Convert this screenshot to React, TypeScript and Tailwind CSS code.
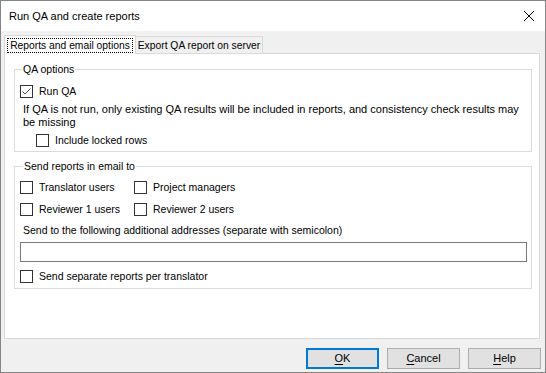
import React, { useState } from 'react';

const Checkbox: React.FC<{ checked?: boolean; onChange?: () => void }> = ({ checked, onChange }) => (
  <span
    onClick={onChange}
    className="w-[13px] h-[13px] border border-[#333333] bg-white flex items-center justify-center shrink-0"
  >
    {checked && (
      <svg width="11" height="11" viewBox="0 0 11 11">
        <path d="M1.5 5.5 L4 8 L9.5 2.5" fill="none" stroke="#555555" strokeWidth="1" />
      </svg>
    )}
  </span>
);

const CheckRow: React.FC<{ label: string; checked?: boolean; className?: string }> = ({ label, checked = false, className = '' }) => {
  const [on, setOn] = useState(checked);
  return (
    <label className={`h-[17px] flex items-center gap-[6px] cursor-default ${className}`}>
      <Checkbox checked={on} onChange={() => setOn(!on)} />
      <span className="leading-[15px] whitespace-nowrap">{label}</span>
    </label>
  );
};

const Button: React.FC<{ accel: string; rest: string; primary?: boolean }> = ({ accel, rest, primary }) => (
  <button
    className={`w-[73px] h-[21px] bg-[#e1e1e1] flex items-center justify-center leading-none text-[11px] ${
      primary ? 'border-2 border-[#0078d7]' : 'border border-[#adadad]'
    }`}
  >
    <span className="underline underline-offset-2">{accel}</span>
    {rest}
  </button>
);

export default function App() {
  const [addresses, setAddresses] = useState('');

  return (
    <div
      className="w-[546px] h-[373px] border border-[#858585] bg-[#f0f0f0] flex flex-col text-[10.5px] text-black"
      style={{ fontFamily: '"Liberation Sans", Arial, sans-serif' }}
    >
      {/* Title bar */}
      <div className="h-[30px] bg-white flex items-center justify-between pl-[8px] pr-[10px] shrink-0 text-[11px]">
        <span>Run QA and create reports</span>
        <svg width="12" height="12" viewBox="0 0 12 12">
          <path d="M1 1 L11 11 M11 1 L1 11" stroke="#000" strokeWidth="1" />
        </svg>
      </div>

      {/* Tabs */}
      <div className="flex items-end h-[22px] pl-[3px] shrink-0 whitespace-nowrap text-[10.3px]">
        <div className="w-[132px] h-[19px] shrink-0 px-[2px] pt-[2px] bg-white border border-b-0 border-[#d9d9d9] relative z-10 -mb-px">
          <span className="block text-center leading-[13px] border border-dotted border-black">Reports and email options</span>
        </div>
        <div className="w-[127px] h-[17px] shrink-0 border border-b-0 border-l-0 border-[#d9d9d9] bg-[#f0f0f0] leading-[17px] text-center">
          Export QA report on server
        </div>
      </div>

      {/* Tab panel */}
      <div className="ml-[3px] mr-[5px] h-[286px] bg-white border border-[#d9d9d9] pt-[8px] pl-[9px] pr-[7px] shrink-0">
        <fieldset className="border border-[#dcdcdc] pl-[5px] pr-[4px] pb-[2px]">
          <legend className="ml-[2px] px-[1px] h-[15px] leading-[15px]">QA options</legend>
          <CheckRow label="Run QA" checked className="mt-[6px]" />
          <p className="mt-[3px] pl-[3px] leading-[13px] text-[11px]">
            If QA is not run, only existing QA results will be included in reports, and consistency check results may be
            missing
          </p>
          <CheckRow label="Include locked rows" className="mt-[3px] ml-[16px]" />
        </fieldset>

        <fieldset className="mt-[7px] border border-[#dcdcdc] pl-[5px] pr-[4px] pb-[3px]">
          <legend className="ml-[3px] px-[1px] h-[15px] leading-[15px]">Send reports in email to</legend>
          <div className="grid grid-cols-[114px_1fr] mt-[5px]">
            <CheckRow label="Translator users" />
            <CheckRow label="Project managers" />
          </div>
          <div className="grid grid-cols-[114px_1fr] mt-[5px]">
            <CheckRow label="Reviewer 1 users" />
            <CheckRow label="Reviewer 2 users" />
          </div>
          <div className="mt-[5px] pl-[3px] h-[15px] leading-[15px]">
            Send to the following additional addresses (separate with semicolon)
          </div>
          <input
            value={addresses}
            onChange={e => setAddresses(e.target.value)}
            className="mt-[4px] block w-full h-[20px] border border-[#7a7a7a] bg-white outline-none px-[2px]"
          />
          <CheckRow label="Send separate reports per translator" className="mt-[6px]" />
        </fieldset>
      </div>

      {/* Footer */}
      <div className="flex justify-end gap-[8px] pr-[4px] mt-[9px]">
        <Button accel="O" rest="K" primary />
        <Button accel="C" rest="ancel" />
        <Button accel="H" rest="elp" />
      </div>
    </div>
  );
}
